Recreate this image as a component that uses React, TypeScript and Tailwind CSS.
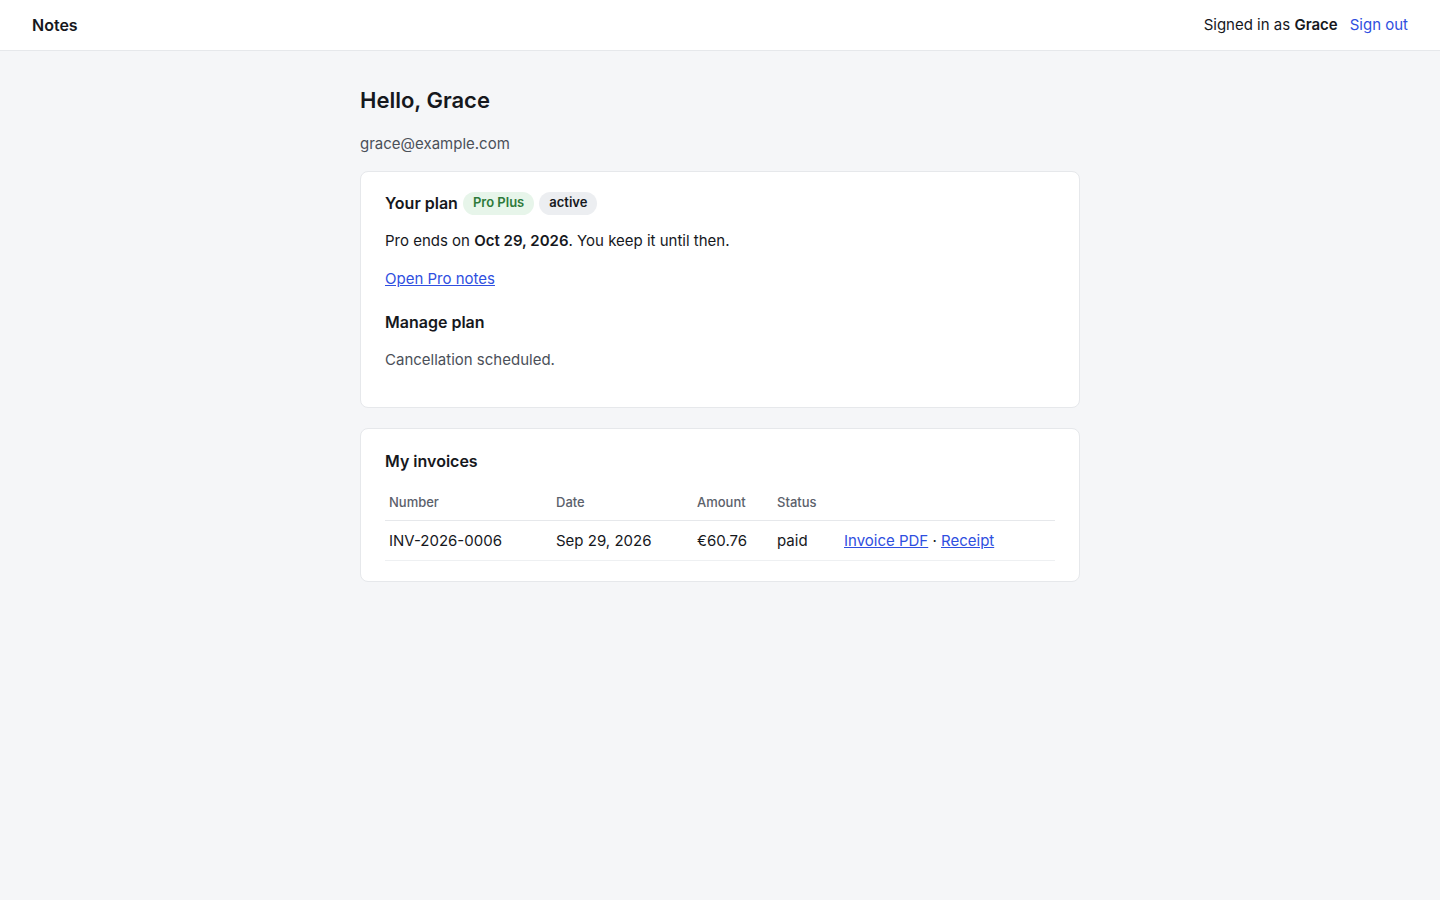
import React from "react";

export default function App() {
  return (
    <div className="min-h-screen bg-[#f5f6f8] text-[#16181d]" style={{ fontFamily: "Inter, 'Noto Sans', sans-serif" }}>
      <header className="h-[51px] bg-white border-b border-[#e6e8eb] flex items-center justify-between px-8">
        <div className="text-[16px] font-semibold">Notes</div>
        <div className="flex items-center gap-3 text-[15px]">
          <span>
            Signed in as <span className="font-semibold">Grace</span>
          </span>
          <a href="#" className="text-[#2f4fe0]">Sign out</a>
        </div>
      </header>
      <main className="w-[720px] mx-auto pt-[33px]">
        <h1 className="text-[22px] leading-[33px] font-semibold">Hello, Grace</h1>
        <p className="mt-[16px] text-[15px] leading-[22px] text-[#4b5059]">grace@example.com</p>
        <section className="mt-[16px] bg-white border border-[#e6e8eb] rounded-lg px-6 pt-5 pb-5">
          <div className="flex items-center gap-[5px] h-[22px]">
            <h2 className="text-[16px] font-semibold leading-[22px]">Your plan</h2>
            <span className="h-[23px] px-[10px] rounded-full bg-[#e7f5ea] text-[#2e7a3a] text-[13px] font-semibold flex items-center">Pro Plus</span>
            <span className="h-[23px] px-[10px] rounded-full bg-[#eceef1] text-[#16181d] text-[13px] font-semibold flex items-center">active</span>
          </div>
          <p className="mt-4 text-[15px] leading-[22px]">
            Pro ends on <span className="font-semibold">Oct 29, 2026</span>. You keep it until then.
          </p>
          <p className="mt-4 text-[15px] leading-[22px]">
            <a href="#" className="text-[#2f4fe0] underline">Open Pro notes</a>
          </p>
          <h3 className="mt-5 text-[16px] leading-[24px] font-semibold">Manage plan</h3>
          <p className="mt-[15px] mb-4 text-[15px] leading-[22px] text-[#4b5059]">Cancellation scheduled.</p>
        </section>
        <section className="mt-5 bg-white border border-[#e6e8eb] rounded-lg px-6 pt-5 pb-5">
          <h2 className="text-[16px] leading-[24px] font-semibold">My invoices</h2>
          <table className="mt-3 w-full border-collapse text-left">
            <thead>
              <tr className="border-b border-[#e6e8eb]">
                <th className="w-[167px] px-1 py-[10px] text-[13px] leading-[15px] font-medium text-[#5b616b]">Number</th>
                <th className="w-[141px] px-1 py-[10px] text-[13px] leading-[15px] font-medium text-[#5b616b]">Date</th>
                <th className="w-[80px] px-1 py-[10px] text-[13px] leading-[15px] font-medium text-[#5b616b]">Amount</th>
                <th className="w-[67px] px-1 py-[10px] text-[13px] leading-[15px] font-medium text-[#5b616b]">Status</th>
                <th className="px-1 py-[10px]"></th>
              </tr>
            </thead>
            <tbody>
              <tr className="border-b border-[#eef0f2] text-[15px]">
                <td className="px-1 py-[10px] leading-[19px]">INV-2026-0006</td>
                <td className="px-1 py-[10px] leading-[19px]">Sep 29, 2026</td>
                <td className="px-1 py-[10px] leading-[19px]">€60.76</td>
                <td className="px-1 py-[10px] leading-[19px]">paid</td>
                <td className="px-1 py-[10px] leading-[19px]">
                  <a href="#" className="text-[#2f4fe0] underline">Invoice PDF</a> · <a href="#" className="text-[#2f4fe0] underline">Receipt</a>
                </td>
              </tr>
            </tbody>
          </table>
        </section>
      </main>
    </div>
  );
}
